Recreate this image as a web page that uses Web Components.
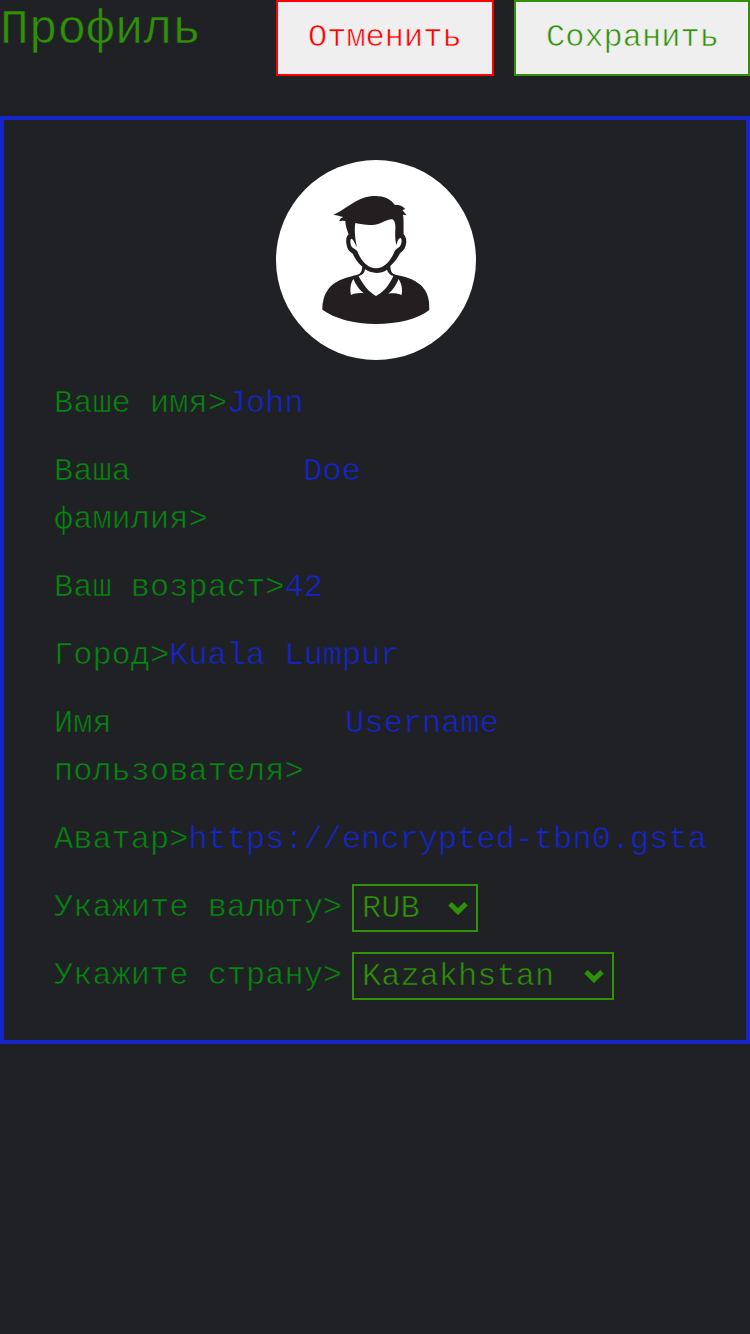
<!DOCTYPE html>
<html lang="ru">
<head>
<meta charset="utf-8">
<title>Профиль</title>
<style>
html{background:#202125}
body{margin:0;font:32px/48px "Courier New",FreeMono,"Liberation Mono",monospace;min-height:1334px;overflow:hidden}
</style>
</head>
<body>
<profile-page></profile-page>
<script>
const define = (name, html) => customElements.define(name, class extends HTMLElement {
  constructor() {
    super();
    const t = document.createElement('template');
    t.innerHTML = html;
    this.attachShadow({mode: 'open'}).append(t.content.cloneNode(true));
  }
});

define('action-button', `<style>
:host{display:block}
button{display:block;box-sizing:border-box;width:100%;margin:0;height:76px;padding:0 0 0 30px;text-align:left;border:2px solid currentColor;border-radius:0;background:#efefef;color:inherit;font:inherit;line-height:36px;white-space:nowrap;-webkit-text-stroke:.6px #efefef}
</style><button><slot></slot></button>`);

define('page-header', `<style>
:host{display:flex;justify-content:space-between;align-items:flex-start;height:76px}
h1{margin:0;font-size:48px;line-height:60px;font-weight:400;color:#2f9108;letter-spacing:-.1px;-webkit-text-stroke:.6px #202125}
div{display:flex;gap:20px}
</style><h1><slot></slot></h1><div><slot name="actions"></slot></div>`);

define('user-avatar', `<style>
:host{display:block;width:200px;height:200px}
svg{display:block}
</style><svg width="200" height="200" viewBox="18 15 600 600">
<circle cx="318" cy="315" r="300" fill="#fff"/>
<g fill="#231f20">
<path d="M190 179C225 165 247 139 286 127C324 117 358 125 374 149C389 149 399 153 406 163L397 165L410 181L399 179C402 194 400 216 401 238C411 248 411 265 404 280C399 288 395 291 390 295C380 314 370 325 361 333C361 349 366 356 377 359C431 369 471 389 477 440L478 465C443 492 383 507 318 507C252 507 193 490 157 464C157 433 166 410 183 393C204 373 231 367 262 359C273 356 276 347 277 335C264 325 255 310 247 295C236 289 231 280 229 265C227 250 231 242 236 238C231 226 226 211 226 198C219 196 214 197 208 199C209 192 214 188 220 186C210 183 201 181 190 179Z"/>
</g>
<g fill="#fff">
<path d="M256 204C273 207 292 212 314 209C337 206 352 191 367 193C374 196 377 207 376 222C375 242 375 257 380 270C382 256 386 249 392 249C397 254 395 269 388 276C381 280 377 283 374 289C362 318 342 340 318 340C294 340 273 318 262 289C258 282 250 281 245 275C240 266 240 252 244 251C250 253 254 263 261 277C256 258 252 225 256 204Z"/>
<path d="M285 343C306 357 332 357 351 344C354 354 361 360 370 363C358 390 341 411 318 423C296 411 279 389 266 364C277 360 284 354 285 343Z"/>
<path d="M250 372C257 388 267 403 281 415C267 413 254 415 243 420C239 402 242 384 250 372Z"/>
<path d="M386 372C395 386 398 403 395 420C383 415 370 413 355 416C370 404 379 389 386 372Z"/>
</g></svg>`);

define('profile-field', `<style>
:host{display:flex;min-height:48px;align-items:flex-start;-webkit-text-stroke:.6px #202125}
.label{flex:none;width:var(--label-width,auto);color:#06870f}
.value{color:#1525cc;white-space:nowrap}
</style><span class="label"><slot name="label"></slot></span><span class="value"><slot></slot></span>`);

define('select-box', `<style>
:host{display:flex;box-sizing:border-box;width:var(--select-width);height:48px;margin-left:10px;padding:0 8px;border:2px solid #2f9108;color:#2f9108;line-height:44px;justify-content:space-between;align-items:center}
span{padding-top:2px}
svg{display:block;flex:none}
</style><span><slot></slot></span><svg width="20" height="14" viewBox="0 0 20 14"><path d="M2 2.8L10 10.6L18 2.8" fill="none" stroke="#2f9108" stroke-width="5"/></svg>`);

define('profile-card', `<style>
:host{display:flex;flex-direction:column;gap:20px;box-sizing:border-box;height:928px;margin-top:40px;padding:40px 36px 40px 50px;border:4px solid #1525c8}
::slotted(user-avatar){align-self:center;margin-left:-12px}
</style><slot></slot>`);

define('profile-page', `<style>
:host{display:block}
.cancel{color:#f00;width:218px}.save{color:#2f9108;width:236px}
.surname{--label-width:249.3px}
.username{--label-width:291.3px}
.currency{--select-width:126px}.country{--select-width:262px}
</style>
<page-header>Профиль
<action-button slot="actions" class="cancel">Отменить</action-button>
<action-button slot="actions" class="save">Сохранить</action-button>
</page-header>
<profile-card>
<user-avatar></user-avatar>
<profile-field><span slot="label">Ваше имя&gt;</span>John</profile-field>
<profile-field class="surname"><span slot="label">Ваша<br>фамилия&gt;</span>Doe</profile-field>
<profile-field><span slot="label">Ваш возраст&gt;</span>42</profile-field>
<profile-field><span slot="label">Город&gt;</span>Kuala Lumpur</profile-field>
<profile-field class="username"><span slot="label">Имя<br>пользователя&gt;</span>Username</profile-field>
<profile-field><span slot="label">Аватар&gt;</span>https://encrypted-tbn0.gsta</profile-field>
<profile-field><span slot="label">Укажите валюту&gt;</span><select-box class="currency">RUB</select-box></profile-field>
<profile-field><span slot="label">Укажите страну&gt;</span><select-box class="country">Kazakhstan</select-box></profile-field>
</profile-card>`);
</script>
</body>
</html>
